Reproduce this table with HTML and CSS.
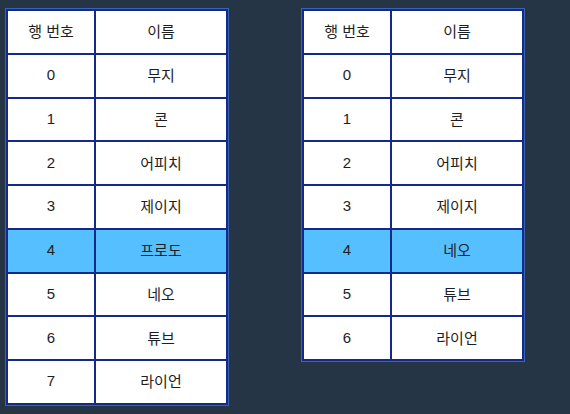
FILE: index.html
```html
<!DOCTYPE html>
<html lang="ko">
<head>
<meta charset="utf-8">
<link rel="stylesheet" href="styles.css">
</head>
<body>
<div class="wrap">
  <table class="grid">
    <tr><td class="c1">행 번호</td><td class="c2">이름</td></tr>
    <tr><td>0</td><td>무지</td></tr>
    <tr><td>1</td><td>콘</td></tr>
    <tr><td>2</td><td>어피치</td></tr>
    <tr><td>3</td><td>제이지</td></tr>
    <tr class="sel"><td>4</td><td>프로도</td></tr>
    <tr><td>5</td><td>네오</td></tr>
    <tr><td>6</td><td>튜브</td></tr>
    <tr><td>7</td><td>라이언</td></tr>
  </table>
  <table class="grid">
    <tr><td class="c1">행 번호</td><td class="c2">이름</td></tr>
    <tr><td>0</td><td>무지</td></tr>
    <tr><td>1</td><td>콘</td></tr>
    <tr><td>2</td><td>어피치</td></tr>
    <tr><td>3</td><td>제이지</td></tr>
    <tr class="sel"><td>4</td><td>네오</td></tr>
    <tr><td>5</td><td>튜브</td></tr>
    <tr><td>6</td><td>라이언</td></tr>
  </table>
</div>
</body>
</html>
```
FILE: styles.css
```css
html, body {
  margin: 0;
  padding: 0;
  background: #253545;
  width: 570px;
  height: 414px;
  overflow: hidden;
}
.wrap {
  display: flex;
  align-items: flex-start;
  gap: 74px;
  padding: 9px 0 0 6px;
}
.grid {
  border-collapse: collapse;
  background: #ffffff;
  outline: 1px solid #3a64ad;
  font-family: "Liberation Sans", "Noto Sans CJK KR", sans-serif;
  font-size: 15px;
  color: #1e1e1e;
}
.grid td {
  border: 2px solid #142a8a;
  height: 43.75px;
  padding: 0 0 2px;
  text-align: center;
  vertical-align: middle;
  box-sizing: border-box;
}
.grid td.c1 { width: 88px; }
.grid td.c2 { width: 132px; }
.grid tr.sel td { background: #56bfff; }
```
